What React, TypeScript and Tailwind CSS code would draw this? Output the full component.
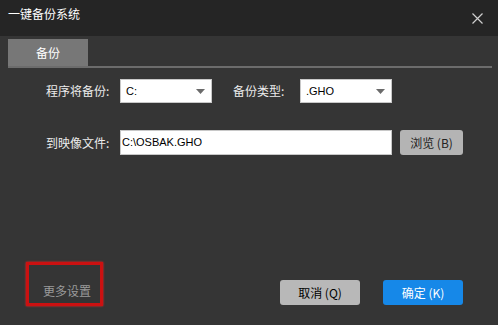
import React from 'react';

const cjk = { fontFamily: '"Noto Sans CJK SC", "Microsoft YaHei", sans-serif' };
const latin = { fontFamily: '"Liberation Sans", "Noto Sans CJK SC", sans-serif' };

function Select({ value, width }: { value: string; width: string }) {
  return (
    <div
      className={`${width} h-[24px] bg-white border border-[#c8c8c8] flex items-center justify-between pl-[5px] pr-[6px] text-[11px] text-black`}
      style={latin}
    >
      <span>{value}</span>
      <svg width="9" height="5" viewBox="0 0 9 5">
        <path d="M0 0 H9 L4.5 5 Z" fill="#6b6b6b" />
      </svg>
    </div>
  );
}

export default function App() {
  return (
    <div className="w-[498px] h-[325px] flex flex-col bg-[#353535] overflow-hidden" style={cjk}>
      {/* Title bar */}
      <div className="h-[36px] bg-[#252525] flex items-start justify-between pl-[8px] pr-[15px] pt-[5px] shrink-0">
        <span className="text-[12px] text-white leading-[18px]">一键备份系统</span>
        <svg width="11" height="11" viewBox="0 0 11 11" className="mt-[8px]">
          <path d="M0.5 0.5 L10.5 10.5 M10.5 0.5 L0.5 10.5" stroke="#cfcfcf" strokeWidth="1.2" />
        </svg>
      </div>

      {/* Body */}
      <div className="flex-1 flex flex-col px-[8px] pt-[3px]">
        <div className="w-[80px] h-[27px] bg-[#777777] flex items-center justify-center text-[12px] text-white">
          备份
        </div>
        <div className="h-[2px] w-[484px] bg-[#6c6c6c]" />

        <div className="pl-[38px] mt-[11px] flex flex-col gap-[27px]">
          <div className="flex items-center">
            <span className="w-[74px] text-[12px] text-[#ececec]">程序将备份:</span>
            <Select value="C:" width="w-[92px]" />
            <span className="ml-[21px] w-[67px] text-[12px] text-[#ececec]">备份类型:</span>
            <Select value=".GHO" width="w-[92px]" />
          </div>
          <div className="flex items-center">
            <span className="w-[74px] text-[12px] text-[#ececec]">到映像文件:</span>
            <div
              className="w-[272px] h-[25px] bg-white border border-[#c8c8c8] flex items-center pl-[1px] text-[11px] text-black"
              style={latin}
            >
              C:\OSBAK.GHO
            </div>
            <button className="ml-[8px] w-[63px] h-[25px] rounded-[3px] bg-[#b4b4b4] text-[12px] text-[#222] flex items-center justify-center">
              浏览 (B)
            </button>
          </div>
        </div>

        <div className="flex-1" />

        <div className="flex items-end justify-between pb-[19px]">
          <div className="ml-[18px] w-[77px] h-[44px] border-[3px] border-[#cc1111] shadow-[0_0_2px_#ff2020] flex items-end pl-[14px] pb-[4px]">
            <span className="text-[12px] text-[#9a9a9a] leading-[16px]">更多设置</span>
          </div>
          <div className="flex gap-[23px] mr-[27px] mb-[1px]">
            <button className="w-[80px] h-[25px] rounded-[3px] bg-[#b8b8b8] text-[12px] text-black flex items-center justify-center">
              取消 (Q)
            </button>
            <button className="w-[80px] h-[25px] rounded-[3px] bg-[#1688e8] text-[12px] text-white flex items-center justify-center">
              确定 (K)
            </button>
          </div>
        </div>
      </div>
    </div>
  );
}
